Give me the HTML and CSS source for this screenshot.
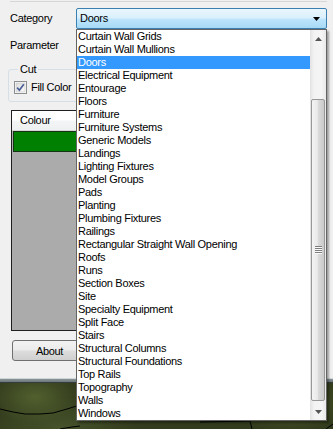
FILE: index.html
```html
<!DOCTYPE html>
<html>
<head>
<meta charset="utf-8">
<link rel="stylesheet" href="styles.css">
</head>
<body>
<div class="screen">
  <div class="window">
    <div class="topline"></div>
    <div class="row row-cat">
      <span class="label">Category</span>
      <div class="combo">
        <span class="combo-text">Doors</span>
        <svg class="combo-arrow" width="7" height="4" viewBox="0 0 7 4"><polygon points="0,0 7,0 3.5,4" fill="#000"/></svg>
      </div>
    </div>
    <div class="row row-param"><span class="label">Parameter</span></div>
    <fieldset class="group">
      <legend>Cut</legend>
      <label class="check">
        <svg class="box" width="13" height="13" viewBox="0 0 13 13">
          <defs><linearGradient id="cb" x1="0" y1="0" x2="1" y2="1"><stop offset="0" stop-color="#dcdcdc"/><stop offset="1" stop-color="#fbfbfb"/></linearGradient></defs>
          <rect x="0.5" y="0.5" width="12" height="12" fill="#fff" stroke="#8e8f8f"/>
          <rect x="2" y="2" width="9" height="9" fill="url(#cb)" stroke="#c4c4c4" stroke-width="0.6"/>
          <path d="M3.2 6.6 L5.4 9.2 L9.8 3.2" fill="none" stroke="#4a5f97" stroke-width="1.7"/>
        </svg>
        <span>Fill Color</span>
      </label>
    </fieldset>
    <div class="listview">
      <div class="lv-header"><div class="lv-col">Colour</div></div>
      <div class="lv-row"><div class="swatch"></div></div>
    </div>
    <button class="btn">About</button>
  </div>
  <div class="edge"></div>
  <div class="viewport">
    <svg class="lines" width="333" height="46" viewBox="0 0 333 46">
      <polyline points="0,26 13,29 25,31 40,31 53,30 67,26 80,22" fill="none" stroke="#000" stroke-width="1"/>
      <polyline points="60,46 72,44 80,43" fill="none" stroke="#000" stroke-width="1"/>
      <polyline points="200,39 250,38 252,46" fill="none" stroke="#000" stroke-width="1"/>
      <polyline points="326,46 333,41" fill="none" stroke="#000" stroke-width="1"/>
    </svg>
  </div>

  <div class="dropdown">
    <ul class="items">
      <li>Curtain Wall Grids</li>
      <li>Curtain Wall Mullions</li>
      <li class="sel">Doors</li>
      <li>Electrical Equipment</li>
      <li>Entourage</li>
      <li>Floors</li>
      <li>Furniture</li>
      <li>Furniture Systems</li>
      <li>Generic Models</li>
      <li>Landings</li>
      <li>Lighting Fixtures</li>
      <li>Model Groups</li>
      <li>Pads</li>
      <li>Planting</li>
      <li>Plumbing Fixtures</li>
      <li>Railings</li>
      <li>Rectangular Straight Wall Opening</li>
      <li>Roofs</li>
      <li>Runs</li>
      <li>Section Boxes</li>
      <li>Site</li>
      <li>Specialty Equipment</li>
      <li>Split Face</li>
      <li>Stairs</li>
      <li>Structural Columns</li>
      <li>Structural Foundations</li>
      <li>Top Rails</li>
      <li>Topography</li>
      <li>Walls</li>
      <li>Windows</li>
    </ul>
    <div class="sb">
      <div class="sb-btn"><svg width="7" height="4" viewBox="0 0 7 4"><polygon points="3.5,0 7,4 0,4" fill="#555"/></svg></div>
      <div class="thumb"><div class="grip"></div></div>
      <div class="sb-btn sb-down"><svg width="7" height="4" viewBox="0 0 7 4"><polygon points="0,0 7,0 3.5,4" fill="#555"/></svg></div>
    </div>
  </div>
</div>
</body>
</html>
```
FILE: styles.css
```css
html, body {
  margin: 0;
  padding: 0;
}
body {
  font-family: "Liberation Sans", Arial, sans-serif;
  font-size: 11px;
  letter-spacing: -0.3px;
  color: #000;
}
.screen {
  position: relative;
  width: 333px;
  height: 429px;
  overflow: hidden;
  background: #f0f0f0;
}
.window {
  height: 378px;
  background: #f0f0f0;
  display: flex;
  flex-direction: column;
  align-items: flex-start;
}
.topline {
  align-self: stretch;
  height: 1px;
  margin: 1px 6px 0 10px;
  background: #d7d7d7;
}
.row {
  display: flex;
  align-items: center;
  padding-left: 10px;
}
.row-cat {
  margin-top: 6px;
  height: 21px;
}
.row-param {
  margin-top: 6px;
  height: 20px;
}
.label {
  width: 66px;
  line-height: 13px;
}
.combo {
  width: 251px;
  height: 21px;
  box-sizing: border-box;
  border: 1px solid #3c7fb1;
  border-radius: 2px;
  background: linear-gradient(#eaf6fd 0%, #d9f0fc 48%, #bee6fd 52%, #a7d9f5 100%);
  display: flex;
  align-items: center;
  justify-content: space-between;
  padding: 0 6px 0 3px;
}
.combo-text {
  line-height: 13px;
}
.combo-arrow {
  display: block;
}
.group {
  margin: 8px 0 0 8px;
  padding: 5px 0 7px 5px;
  border: 1px solid #d5dfe5;
  border-radius: 3px;
  width: 300px;
  box-sizing: border-box;
  min-width: 0;
}
.group legend {
  padding: 0 2px;
  margin-left: 4px;
  line-height: 13px;
}
.check {
  display: flex;
  align-items: center;
  gap: 4px;
  height: 13px;
  line-height: 13px;
}
.box {
  display: block;
  flex: none;
}
.listview {
  margin: 8px 0 0 11px;
  width: 300px;
  height: 221px;
  box-sizing: border-box;
  border: 1px solid #1f1f1f;
  background: #ababab;
}
.lv-header {
  height: 20px;
  box-sizing: border-box;
  background: linear-gradient(#ffffff 0%, #ffffff 45%, #f3f4f6 55%, #eef0f2 100%);
  border-bottom: 1px solid #d5d5d5;
  display: flex;
}
.lv-col {
  width: 100px;
  padding-left: 8px;
  line-height: 19px;
  border-right: 1px solid #e3e3e3;
}
.lv-row {
  height: 21px;
  display: flex;
  padding-left: 1px;
}
.swatch {
  width: 120px;
  height: 21px;
  box-sizing: border-box;
  background: #008000;
  border: 1px solid #163316;
}
.btn {
  margin: 9px 0 0 12px;
  width: 75px;
  height: 21px;
  padding: 0;
  border: 1px solid #707070;
  border-radius: 3px;
  background: linear-gradient(#f2f2f2 0%, #ebebeb 48%, #dddddd 52%, #cfcfcf 100%);
  font: inherit;
  letter-spacing: inherit;
  color: #000;
}
.edge {
  height: 5px;
  box-sizing: border-box;
  border-top: 1px solid #cfd4d6;
  border-bottom: 1px solid #363c3d;
  background: linear-gradient(#8a9598, #6a7679);
}
.viewport {
  height: 46px;
  background:
    radial-gradient(ellipse 55px 28px at 150px 12px, #5b6a34, rgba(0,0,0,0)),
    radial-gradient(ellipse 45px 26px at 35px 14px, #52602e, rgba(0,0,0,0)),
    radial-gradient(ellipse 80px 30px at 60px 44px, #45522a, rgba(0,0,0,0)),
    radial-gradient(ellipse 60px 30px at 290px 20px, #4a5729, rgba(0,0,0,0)),
    #323b1d;
}
.lines {
  display: block;
}
.dropdown {
  position: absolute;
  left: 76px;
  top: 29px;
  width: 251px;
  height: 392px;
  box-sizing: border-box;
  border: 1px solid #646464;
  background: #fff;
  display: flex;
  box-shadow: 2px 2px 2px rgba(0, 0, 0, 0.35);
}
.items {
  width: 233px;
  list-style: none;
  margin: 0;
  padding: 0;
  overflow: hidden;
}
.items li {
  height: 13px;
  line-height: 13px;
  padding-left: 1px;
  white-space: nowrap;
}
.items li.sel {
  background: #3399ff;
  color: #fff;
}
.sb {
  width: 16px;
  display: flex;
  flex-direction: column;
  background: linear-gradient(to right, #e2e2e2 0%, #f3f3f3 25%, #f5f5f5 70%, #e9e9e9 100%);
}
.sb-btn {
  height: 17px;
  flex: none;
  display: flex;
  align-items: center;
  justify-content: center;
}
.sb-btn svg {
  display: block;
}
.sb-down {
  margin-top: auto;
}
.thumb {
  margin: 52px 0 0 1px;
  width: 14px;
  height: 302px;
  box-sizing: border-box;
  flex: none;
  border: 1px solid #979797;
  border-radius: 2px;
  background: linear-gradient(to right, #f4f4f4 0%, #e9e9e9 45%, #d9d9d9 55%, #cacaca 100%);
  display: flex;
  align-items: center;
  justify-content: center;
}
.grip {
  width: 7px;
  height: 8px;
  background: repeating-linear-gradient(#7d7d7d 0, #7d7d7d 1px, #fafafa 1px, #fafafa 2px);
}
```
